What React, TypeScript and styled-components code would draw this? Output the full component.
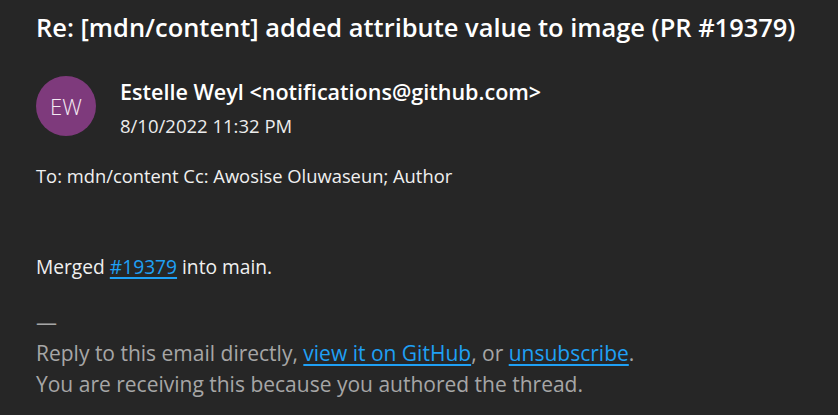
import React from "react";
import styled, { createGlobalStyle } from "styled-components";

const Global = createGlobalStyle`
  html, body { margin: 0; padding: 0; background: #262626; }
  body { font-family: "Open Sans", "Noto Sans", sans-serif; color: #f2f2f2; }
`;

const Page = styled.div`
  width: 838px;
  height: 415px;
  box-sizing: border-box;
  padding: 7px 0 0 36px;
  background: #262626;
  overflow: hidden;
`;

const Subject = styled.h1`
  margin: 0;
  font-size: 25.45px;
  font-weight: 600;
  line-height: 40px;
  color: #ffffff;
  white-space: nowrap;
`;

const Header = styled.div`
  display: flex;
  align-items: flex-start;
  gap: 24px;
  margin-top: 29px;
`;

const Avatar = styled.div`
  width: 60px;
  height: 60px;
  border-radius: 50%;
  background: #7e3a7c;
  color: #f4eaf3;
  display: flex;
  align-items: center;
  justify-content: center;
  font-size: 22px;
  font-weight: 300;
  flex-shrink: 0;
`;

const SenderInfo = styled.div`
  display: flex;
  flex-direction: column;
  gap: 2px;
`;

const SenderName = styled.div`
  font-size: 21.55px;
  font-weight: 600;
  line-height: 32px;
  color: #ffffff;
  white-space: nowrap;
`;

const DateLine = styled.div`
  font-size: 18.5px;
  line-height: 32px;
  color: #ececec;
`;

const Recipients = styled.div`
  margin-top: 21px;
  font-size: 18.35px;
  line-height: 26px;
  color: #f0f0f0;
  white-space: nowrap;
`;

const Body = styled.div`
  margin-top: 65px;
  font-size: 19.2px;
  line-height: 26px;
  color: #f0f0f0;
  white-space: nowrap;
`;

const Footer = styled.div`
  margin-top: 27px;
  font-size: 21px;
  line-height: 31px;
  color: #a6a6a6;
  white-space: nowrap;
`;

const Link = styled.a`
  color: #1fa0f5;
  text-decoration: underline;
  text-decoration-thickness: 2px;
  text-underline-offset: 3px;
`;

const Line = styled.div``;

export default function App() {
  return (
    <>
      <Global />
      <Page>
        <Subject>Re: [mdn/content] added attribute value to image (PR #19379)</Subject>
        <Header>
          <Avatar>EW</Avatar>
          <SenderInfo>
            <SenderName>Estelle Weyl &lt;notifications@github.com&gt;</SenderName>
            <DateLine>8/10/2022 11:32 PM</DateLine>
          </SenderInfo>
        </Header>
        <Recipients>To: mdn/content Cc: Awosise Oluwaseun; Author</Recipients>
        <Body>
          Merged <Link href="#">#19379</Link> into main.
        </Body>
        <Footer>
          <Line>—</Line>
          <Line>
            Reply to this email directly, <Link href="#">view it on GitHub</Link>, or{" "}
            <Link href="#">unsubscribe</Link>.
          </Line>
          <Line>You are receiving this because you authored the thread.</Line>
        </Footer>
      </Page>
    </>
  );
}
